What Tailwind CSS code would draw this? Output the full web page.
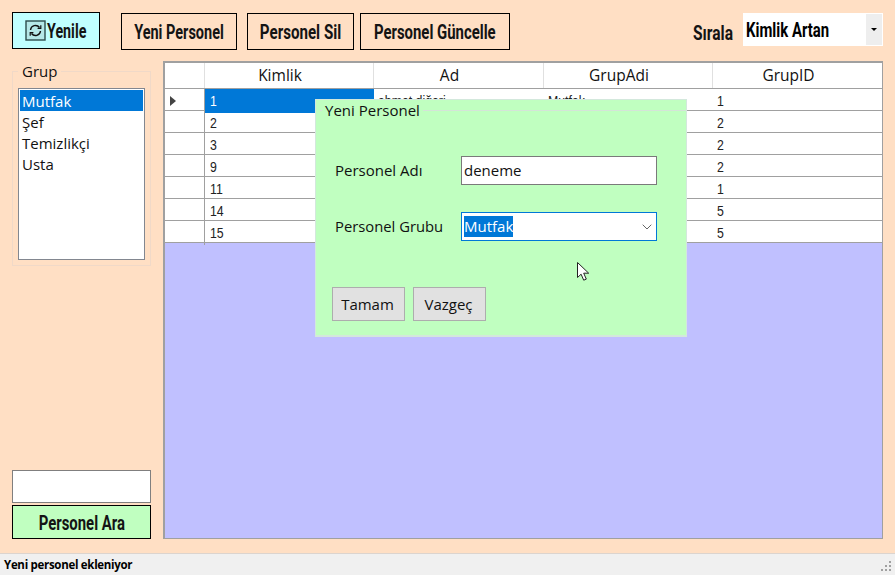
<!DOCTYPE html>
<html><head><meta charset="utf-8"><script src="https://cdn.jsdelivr.net/npm/@tailwindcss/browser@4"></script></head>
<body class="m-0">
<div class="relative w-[895px] h-[575px] overflow-hidden bg-[#ffdfc4] flex flex-col font-['Open_Sans','Noto_Sans',sans-serif] text-[15px] text-[#111]">
  <div class="h-[61px] shrink-0 flex items-start pl-[12px] font-['Roboto',sans-serif] text-[21px] font-bold text-[#141414] whitespace-nowrap">
    <button class="mt-[12px] w-[88px] h-[37px] bg-[#c0ffff] border border-black flex items-center pl-[12px]">
      <svg width="21" height="21" viewBox="0 0 21 21" fill="none"><rect x="1" y="1" width="19" height="19" fill="#b5e8e8" stroke="#2c4c4c" stroke-width="1.4"/><path d="M5.5 10a5 5 0 0 1 9-2.5M15.5 11a5 5 0 0 1-9 2.5" stroke="#111" stroke-width="1.4"/><path d="M15.8 5.2v3.2h-3.2M5.2 15.8v-3.2h3.2" stroke="#111" stroke-width="1.2"/></svg>
      <span class="inline-block w-[42px] ml-[1px] text-left"><span class="inline-block origin-left translate-y-[1px] scale-x-[0.68]">Yenile</span></span>
    </button>
    <button class="ml-[21px] mt-[13px] w-[116px] h-[37px] border border-black flex items-center justify-center"><span class="inline-block translate-y-[1px] scale-x-[0.69]">Yeni Personel</span></button>
    <button class="ml-[10px] mt-[13px] w-[107px] h-[37px] border border-black flex items-center justify-center"><span class="inline-block translate-y-[1px] scale-x-[0.72]">Personel Sil</span></button>
    <button class="ml-[6px] mt-[13px] w-[150px] h-[37px] border border-black flex items-center justify-center"><span class="inline-block translate-y-[1px] scale-x-[0.71]">Personel Güncelle</span></button>
    <span class="ml-[183px] mt-[18px] w-[50px]"><span class="inline-block origin-left scale-x-[0.74]">Sırala</span></span>
    <div class="mt-[13px] w-[140px] h-[33px] bg-white flex items-center justify-between pl-[3px] pr-[1px] py-[1px] text-black">
      <span class="inline-block origin-left translate-y-[1px] scale-x-[0.71]">Kimlik Artan</span>
      <span class="w-[16px] h-[31px] bg-[#eeeeee] flex items-center justify-center"><span class="w-0 h-0 border-x-[3px] border-x-transparent border-t-[3px] border-t-black"></span></span>
    </div>
  </div>
  <div class="flex-1 min-h-0 flex pl-[12px]">
    <div class="w-[139px] h-[478px] flex flex-col">
      <div class="relative mt-[10px] h-[195px] border border-[#f0d9c8] px-[5px] pt-[16px]">
        <span class="absolute left-[5px] top-[-10px] px-[4px] bg-[#ffdfc4] leading-[18px] text-[15px]">Grup</span>
        <ul class="h-[172px] bg-white border border-[#828790] p-[1px]">
          <li class="h-[21px] pt-[2px] leading-[19px] bg-[#0078d7] text-white pl-[2px]">Mutfak</li>
          <li class="h-[21px] pt-[2px] leading-[19px] pl-[2px]">Şef</li>
          <li class="h-[21px] pt-[2px] leading-[19px] pl-[2px]">Temizlikçi</li>
          <li class="h-[21px] pt-[2px] leading-[19px] pl-[2px]">Usta</li>
        </ul>
      </div>
      <div class="mt-auto h-[33px] bg-white border border-[#807f7f]"></div>
      <button class="mt-[2px] h-[34px] bg-[#c0ffc0] border border-black font-['Roboto',sans-serif] text-[21px] font-bold text-[#141414] whitespace-nowrap flex items-center justify-center"><span class="inline-block translate-y-[2px] scale-x-[0.71]">Personel Ara</span></button>
    </div>
    <div class="ml-[12px] w-[720px] h-[478px] bg-[#c0c0ff] border-2 border-[#a0a0a0] border-b border-r">
      <div class="grid grid-cols-[40px_169px_170px_169px_1fr] bg-white h-[26px] text-[15.5px] border-b border-[#a0a0a0] text-center leading-[25px]">
        <div class="border-r border-[#e0e0e0]"></div><div class="border-r border-[#e0e0e0] pr-[18px]">Kimlik</div><div class="border-r border-[#e0e0e0] pr-[18px]">Ad</div><div class="border-r border-[#e0e0e0] pr-[18px]">GrupAdi</div><div class="pr-[18px]">GrupID</div>
      </div>
      <div class="font-['Liberation_Sans',sans-serif] text-[15px] leading-[24px] text-[#222]">
        <div class="grid grid-cols-[40px_169px_170px_169px_1fr] h-[22px] bg-white border-b border-[#a0a0a0]">
          <div class="border-r border-[#a0a0a0] flex items-center pl-[5px]"><span class="w-0 h-0 border-y-[5px] border-y-transparent border-l-[6px] border-l-[#444]"></span></div>
          <div class="bg-[#0078d7] text-white pl-[5px]"><span class="inline-block origin-left scale-x-[0.82]">1</span></div><div class="pl-[4px]"><span class="inline-block origin-left scale-x-[0.82]">ahmet diğeri</span></div><div class="pl-[4px]"><span class="inline-block origin-left scale-x-[0.82]">Mutfak</span></div><div class="pl-[4px]"><span class="inline-block origin-left scale-x-[0.82]">1</span></div>
        </div>
        <div class="grid grid-cols-[40px_169px_170px_169px_1fr] h-[22px] bg-white border-b border-[#a0a0a0]"><div class="border-r border-[#a0a0a0]"></div><div class="pl-[5px]"><span class="inline-block origin-left scale-x-[0.82]">2</span></div><div></div><div></div><div class="pl-[4px]"><span class="inline-block origin-left scale-x-[0.82]">2</span></div></div>
        <div class="grid grid-cols-[40px_169px_170px_169px_1fr] h-[22px] bg-white border-b border-[#a0a0a0]"><div class="border-r border-[#a0a0a0]"></div><div class="pl-[5px]"><span class="inline-block origin-left scale-x-[0.82]">3</span></div><div></div><div></div><div class="pl-[4px]"><span class="inline-block origin-left scale-x-[0.82]">2</span></div></div>
        <div class="grid grid-cols-[40px_169px_170px_169px_1fr] h-[22px] bg-white border-b border-[#a0a0a0]"><div class="border-r border-[#a0a0a0]"></div><div class="pl-[5px]"><span class="inline-block origin-left scale-x-[0.82]">9</span></div><div></div><div></div><div class="pl-[4px]"><span class="inline-block origin-left scale-x-[0.82]">2</span></div></div>
        <div class="grid grid-cols-[40px_169px_170px_169px_1fr] h-[22px] bg-white border-b border-[#a0a0a0]"><div class="border-r border-[#a0a0a0]"></div><div class="pl-[5px]"><span class="inline-block origin-left scale-x-[0.82]">11</span></div><div></div><div></div><div class="pl-[4px]"><span class="inline-block origin-left scale-x-[0.82]">1</span></div></div>
        <div class="grid grid-cols-[40px_169px_170px_169px_1fr] h-[22px] bg-white border-b border-[#a0a0a0]"><div class="border-r border-[#a0a0a0]"></div><div class="pl-[5px]"><span class="inline-block origin-left scale-x-[0.82]">14</span></div><div></div><div></div><div class="pl-[4px]"><span class="inline-block origin-left scale-x-[0.82]">5</span></div></div>
        <div class="grid grid-cols-[40px_169px_170px_169px_1fr] h-[22px] bg-white border-b border-[#a0a0a0]"><div class="border-r border-[#a0a0a0]"></div><div class="pl-[5px]"><span class="inline-block origin-left scale-x-[0.82]">15</span></div><div></div><div></div><div class="pl-[4px]"><span class="inline-block origin-left scale-x-[0.82]">5</span></div></div>
      </div>
    </div>
  </div>
  <div class="h-[22px] shrink-0 bg-[#f0f0f0] border-t border-[#dcd4ce] flex items-center justify-between pl-[4px] font-['Open_Sans',sans-serif] text-[11.5px] font-bold tracking-[-0.3px] text-black">
    <span>Yeni personel ekleniyor</span>
    <svg width="12" height="12" viewBox="0 0 12 12" fill="#a0a0a0" class="mr-[2px] mt-[4px]"><rect x="8" y="0" width="2" height="2"/><rect x="4" y="4" width="2" height="2"/><rect x="8" y="4" width="2" height="2"/><rect x="0" y="8" width="2" height="2"/><rect x="4" y="8" width="2" height="2"/><rect x="8" y="8" width="2" height="2"/></svg>
  </div>

  <div class="absolute left-[315px] top-[99px] w-[372px] h-[238px] bg-[#c0ffc0] border border-[#d3e8dc] border-b-2">
    <div class="absolute left-[4px] right-0 top-[10px] h-px bg-[#d4e4d8]"></div>
    <span class="absolute left-[6px] top-0 px-[3px] bg-[#c0ffc0] leading-[20px] text-[15px]">Yeni Personel</span>
    <div class="absolute left-[19px] top-[56px] w-[322px] flex items-center justify-between">
      <span>Personel Adı</span>
      <div class="w-[196px] h-[29px] bg-white border border-[#7a7a7a] pl-[2px] leading-[26px]">deneme</div>
    </div>
    <div class="absolute left-[19px] top-[112px] w-[322px] flex items-center justify-between">
      <span class="text-[14.8px]">Personel Grubu</span>
      <div class="w-[196px] h-[29px] bg-white border border-[#0078d7] pl-[2px] flex items-center justify-between pr-[4px]">
        <span class="bg-[#0078d7] text-white leading-[21px]">Mutfak</span>
        <svg width="10" height="6" viewBox="0 0 10 6" fill="none"><path d="M.7.7 5 5 9.3.7" stroke="#666" stroke-width="1"/></svg>
      </div>
    </div>
    <div class="absolute left-[16px] top-[187px] flex gap-[8px]">
      <button class="w-[73px] h-[34px] bg-[#e1e1e1] border border-[#adadad] pr-[2px]">Tamam</button>
      <button class="w-[73px] h-[34px] bg-[#e1e1e1] border border-[#adadad] pr-[2px]">Vazgeç</button>
    </div>
  </div>
  <svg class="absolute left-[577px] top-[262px]" width="13" height="20" viewBox="0 0 13 20"><path d="M.5.5v15l3.6-3.3 2.6 6 2.6-1.1-2.6-5.9h5z" fill="#fff" stroke="#222" stroke-width="1"/></svg>
</div>
</body></html>
